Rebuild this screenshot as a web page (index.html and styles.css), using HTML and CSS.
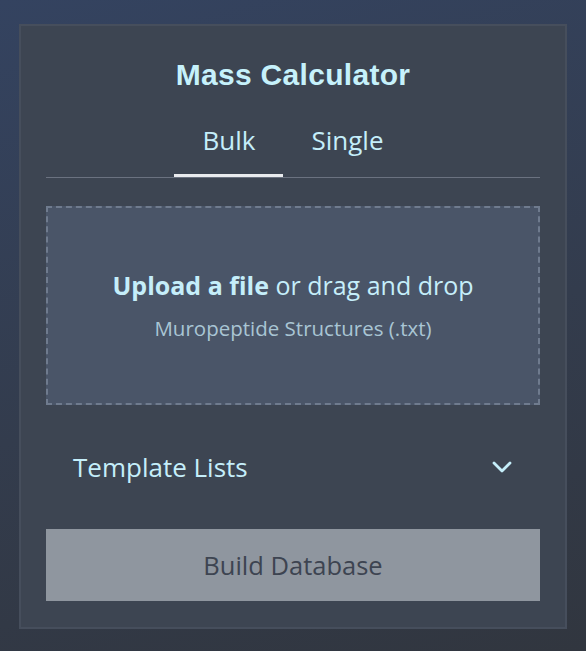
FILE: index.html
```html
<!DOCTYPE html>
<html lang="en">
<head>
<meta charset="utf-8">
<title>Mass Calculator</title>
<link rel="stylesheet" href="styles.css">
</head>
<body>
<main class="card">
  <h1 class="title">Mass Calculator</h1>
  <nav class="tabs">
    <button class="tab tab-active">Bulk</button>
    <button class="tab">Single</button>
  </nav>
  <div class="dropzone">
    <p class="drop-main"><span class="drop-link">Upload a file</span> or drag and drop</p>
    <p class="drop-sub">Muropeptide Structures (.txt)</p>
  </div>
  <div class="disclosure">
    <span class="disclosure-label">Template Lists</span>
    <svg class="chevron" width="20" height="12" viewBox="0 0 20 12" aria-hidden="true">
      <path d="M2 2 L10 10 L18 2" fill="none" stroke="currentColor" stroke-width="2.8" stroke-linecap="round" stroke-linejoin="round"/>
    </svg>
  </div>
  <button class="build">Build Database</button>
</main>
</body>
</html>
```

FILE: styles.css
```css
html, body {
  margin: 0;
  padding: 0;
}

body {
  width: 586px;
  height: 651px;
  overflow: hidden;
  background: linear-gradient(165deg, #344360 0%, #333c4d 55%, #31363f 100%);
  font-family: "Open Sans", "Noto Sans", sans-serif;
  color: #c5eefa;
}

.card {
  box-sizing: border-box;
  width: 548px;
  height: 605px;
  margin: 24px 0 0 19px;
  padding: 31px 25px 26px;
  background: #3d4552;
  border: 2px solid #464e5c;
  display: flex;
  flex-direction: column;
}

.title {
  margin: 0;
  font-family: "Liberation Sans", Arial, sans-serif;
  font-weight: 700;
  font-size: 30px;
  line-height: 36px;
  letter-spacing: 0.3px;
  text-align: center;
  color: #c6f1fb;
}

.tabs {
  display: flex;
  justify-content: center;
  border-bottom: 1px solid #6b7280;
}

.tab {
  font-family: inherit;
  font-size: 26px;
  line-height: 34px;
  color: #c5eefa;
  background: none;
  border: 0;
  border-bottom: 3px solid transparent;
  padding: 30px 28px 17px;
  margin: 0;
}

.tab-active {
  border-bottom-color: #e9ebee;
}

.dropzone {
  box-sizing: border-box;
  height: 199px;
  margin-top: 28px;
  background: #4a5568;
  border: 2px dashed #6f7b8e;
  display: flex;
  flex-direction: column;
  align-items: center;
  justify-content: center;
  padding-bottom: 2px;
}

.drop-main {
  margin: 0;
  font-size: 25px;
  line-height: 34px;
  color: #c5eefa;
}

.drop-link {
  font-weight: 700;
}

.drop-sub {
  margin: 12px 0 0;
  font-size: 20.5px;
  line-height: 28px;
  color: #a9c5d4;
}

.disclosure {
  display: flex;
  align-items: center;
  justify-content: space-between;
  margin-top: 45px;
  padding: 0 28px 0 27px;
  height: 34px;
}

.disclosure-label {
  font-size: 26px;
  line-height: 34px;
  color: #c5eefa;
}

.chevron {
  color: #c5eefa;
  display: block;
}

.build {
  margin-top: 45px;
  height: 72px;
  border: 0;
  background: #8f969f;
  color: #3d4451;
  font-family: inherit;
  font-size: 25.5px;
  line-height: 34px;
  padding: 0;
}
```
